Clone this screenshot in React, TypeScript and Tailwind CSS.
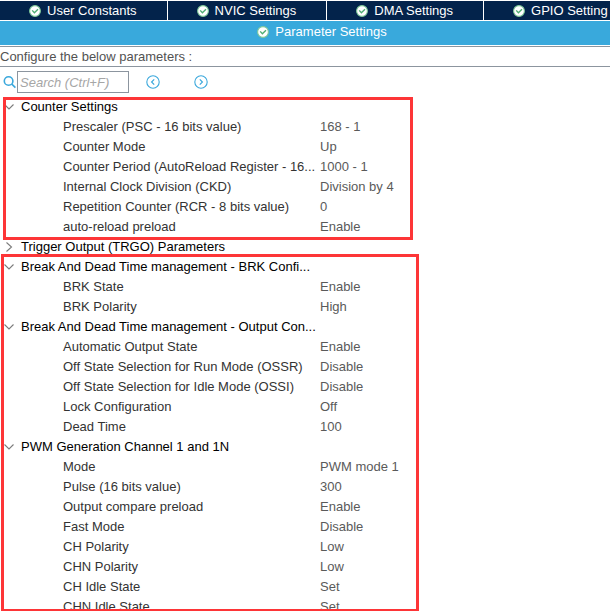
type Row = [label: string, value: string];
type Group = { title: string; open: boolean; rows: Row[] };

const tabs = ["User Constants", "NVIC Settings", "DMA Settings", "GPIO Setting"];

const counterGroup: Group = {
  title: "Counter Settings",
  open: true,
  rows: [
    ["Prescaler (PSC - 16 bits value)", "168 - 1"],
    ["Counter Mode", "Up"],
    ["Counter Period (AutoReload Register - 16...", "1000 - 1"],
    ["Internal Clock Division (CKD)", "Division by 4"],
    ["Repetition Counter (RCR - 8 bits value)", "0"],
    ["auto-reload preload", "Enable"],
  ],
};

const triggerGroup: Group = {
  title: "Trigger Output (TRGO) Parameters",
  open: false,
  rows: [],
};

const outputGroups: Group[] = [
  {
    title: "Break And Dead Time management - BRK Confi...",
    open: true,
    rows: [
      ["BRK State", "Enable"],
      ["BRK Polarity", "High"],
    ],
  },
  {
    title: "Break And Dead Time management - Output Con...",
    open: true,
    rows: [
      ["Automatic Output State", "Enable"],
      ["Off State Selection for Run Mode (OSSR)", "Disable"],
      ["Off State Selection for Idle Mode (OSSI)", "Disable"],
      ["Lock Configuration", "Off"],
      ["Dead Time", "100"],
    ],
  },
  {
    title: "PWM Generation Channel 1 and 1N",
    open: true,
    rows: [
      ["Mode", "PWM mode 1"],
      ["Pulse (16 bits value)", "300"],
      ["Output compare preload", "Enable"],
      ["Fast Mode", "Disable"],
      ["CH Polarity", "Low"],
      ["CHN Polarity", "Low"],
      ["CH Idle State", "Set"],
      ["CHN Idle State", "Set"],
    ],
  },
];

function CheckBadge() {
  return (
    <svg className="size-3 shrink-0" viewBox="0 0 12 12" aria-hidden="true">
      <circle cx="6" cy="6" r="5.4" fill="#fff" stroke="#7fc998" strokeWidth="1.1" />
      <path d="M3.2 5.4 5.4 7.8 9 4.2" fill="none" stroke="#4fae72" strokeWidth="1.4" />
    </svg>
  );
}

function Chevron({ open }: { open: boolean }) {
  return (
    <svg className="size-3 shrink-0" viewBox="0 0 12 12" fill="none" stroke="#7c7c7c" strokeWidth="1.1" aria-hidden="true">
      <path d={open ? "M1.5 3.5 6 8 10.5 3.5" : "M3.5 1.5 8.5 6 3.5 10.5"} />
    </svg>
  );
}

function StepIcon({ direction }: { direction: "previous" | "next" }) {
  return (
    <svg className="size-3.5" viewBox="0 0 14 14" fill="none" stroke="#3ba8dc" strokeWidth="1.1" aria-hidden="true">
      <circle cx="7" cy="7" r="6.2" />
      <path d={direction === "previous" ? "M8.2 4.4 5.6 7 8.2 9.6" : "M5.8 4.4 8.4 7 5.8 9.6"} strokeWidth="1.2" />
    </svg>
  );
}

function ParameterGroup({ group }: { group: Group }) {
  return (
    <table className="w-full table-fixed border-collapse text-left">
      <colgroup>
        <col className="w-80" />
        <col />
      </colgroup>
      <tbody>
        <tr className="h-5">
          <th colSpan={2} className="p-0 font-normal">
            <button type="button" aria-expanded={group.open} className="flex h-5 items-center gap-1.5 pl-[3px] text-black">
              <Chevron open={group.open} />
              {group.title}
            </button>
          </th>
        </tr>
        {group.rows.map(([label, value]) => (
          <tr key={label} className="h-5">
            <th scope="row" className="whitespace-nowrap p-0 pl-[63px] font-normal text-[#333333]">
              {label}
            </th>
            <td className="whitespace-nowrap p-0 text-[#5a5a5a]">{value}</td>
          </tr>
        ))}
      </tbody>
    </table>
  );
}

export default function App() {
  return (
    <main className="flex h-screen flex-col overflow-hidden bg-white font-['Liberation_Sans',Arial,sans-serif] text-[13px] leading-5">
      <nav className="flex shrink-0 gap-px overflow-hidden border-y border-white text-white">
        {tabs.map((tab) => (
          <button
            key={tab}
            type="button"
            className="flex h-[19px] shrink-0 items-center gap-1.5 bg-[#03234b] pl-[29px] pr-[30px] pt-px"
          >
            <CheckBadge />
            {tab}
          </button>
        ))}
      </nav>
      <button
        type="button"
        className="flex h-6 w-full shrink-0 items-center justify-center gap-1.5 bg-[#39a9dc] pb-0.5 pl-[34px] text-white"
      >
        <CheckBadge />
        Parameter Settings
      </button>
      <p className="mt-px h-[21px] shrink-0 border-y border-[#8c959f] leading-[19px] text-[#525252]">
        Configure the below parameters :
      </p>
      <div className="flex h-[30px] shrink-0 items-center pl-[3px]">
        <label htmlFor="search" aria-label="Search">
          <svg className="size-3.5" viewBox="0 0 14 14" fill="none" stroke="#3ba8dc" strokeWidth="1.6" aria-hidden="true">
            <circle cx="5.6" cy="6" r="4.3" />
            <path d="M8.8 9.2 12.4 12.6" />
          </svg>
        </label>
        <input
          id="search"
          type="text"
          placeholder="Search (Ctrl+F)"
          className="h-[22px] w-28 border border-[#8c959f] px-0.5 italic placeholder:text-[#a6a6a6]"
        />
        <button type="button" aria-label="Previous match" className="ml-[17px]">
          <StepIcon direction="previous" />
        </button>
        <button type="button" aria-label="Next match" className="ml-[34px]">
          <StepIcon direction="next" />
        </button>
      </div>
      <section className="relative shrink-0">
        <ParameterGroup group={counterGroup} />
        <div className="pointer-events-none absolute -bottom-[3px] left-[3px] top-0 w-[410px] border-3 border-[#fd3537]" />
      </section>
      <section className="shrink-0">
        <ParameterGroup group={triggerGroup} />
      </section>
      <section className="relative min-h-0 flex-1">
        <div className="h-full overflow-hidden">
          {outputGroups.map((group) => (
            <ParameterGroup key={group.title} group={group} />
          ))}
        </div>
        <div className="pointer-events-none absolute -top-[3px] bottom-0 left-px w-[418px] border-3 border-b-2 border-[#fd3537]" />
      </section>
    </main>
  );
}
